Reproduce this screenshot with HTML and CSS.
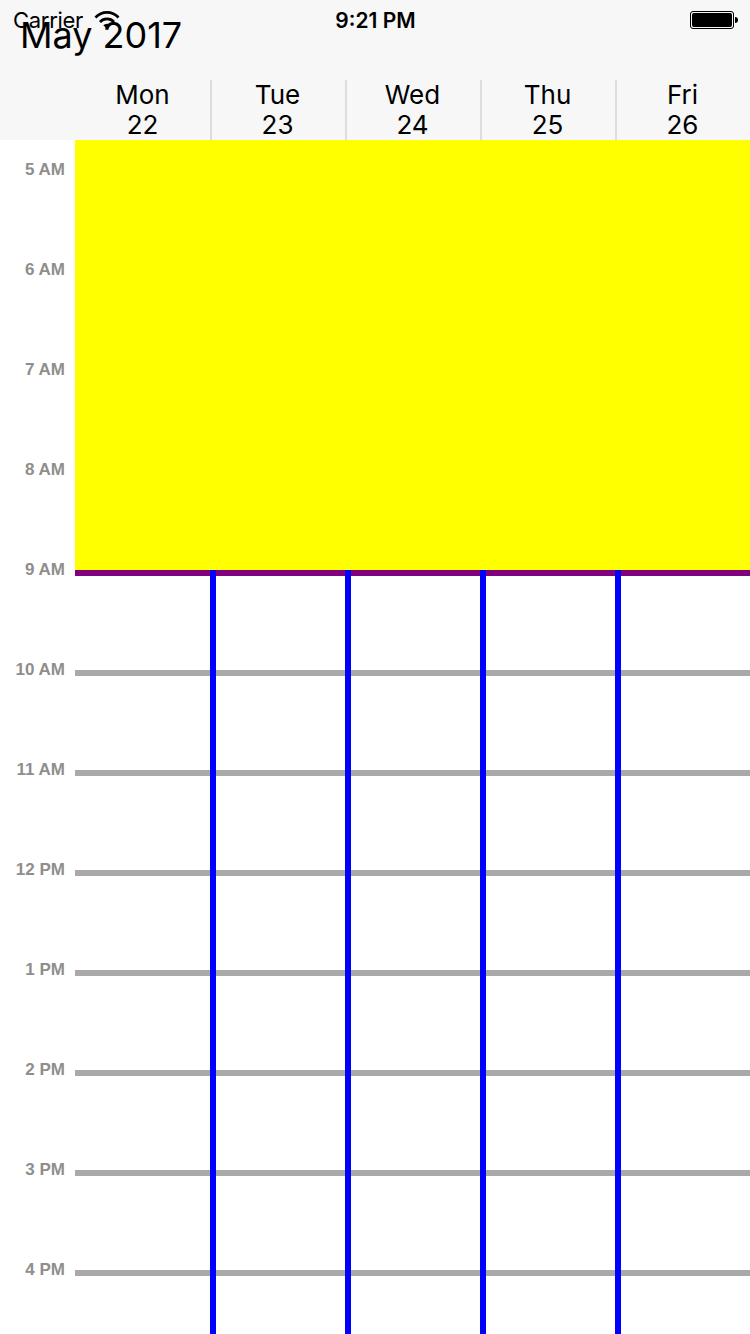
FILE: index.html
```html
<!DOCTYPE html>
<html lang="en">
  <head>
    <meta charset="UTF-8" />
    <meta name="viewport" content="width=device-width, initial-scale=1.0" />
    <title>Week view</title>
    <link rel="stylesheet" href="styles.css">
  </head>
  <body>
    <div class="status-bar">
      <div class="status-left">
        <span class="carrier">Carrier</span>
        <svg class="wifi" width="28" height="20" viewBox="0 0 28 20">
          <path d="M1.5 7.5 A17 17 0 0 1 26.5 7.5 L24.6 9.4 A14.4 14.4 0 0 0 3.4 9.4 Z" fill="#000" />
          <path d="M6 12 A11 11 0 0 1 22 12 L20.1 13.9 A8.4 8.4 0 0 0 7.9 13.9 Z" fill="#000" />
          <path d="M10.3 16.2 A5.2 5.2 0 0 1 17.7 16.2 L14 20 Z" fill="#000" />
        </svg>
      </div>
      <span class="clock">9:21 PM</span>
      <div class="battery">
        <div class="battery-body"><div class="battery-level"></div></div>
        <div class="battery-tip"></div>
      </div>
    </div>

    <header class="top">
      <h1 class="month">May 2017</h1>
      <div class="days">
        <div class="day">Mon<br>22</div>
        <div class="day">Tue<br>23</div>
        <div class="day">Wed<br>24</div>
        <div class="day">Thu<br>25</div>
        <div class="day">Fri<br>26</div>
      </div>
    </header>

    <main class="calendar">
      <div class="hour"><span class="hour-label">5 AM</span><div class="hour-line"></div></div>
      <div class="hour"><span class="hour-label">6 AM</span><div class="hour-line"></div></div>
      <div class="hour"><span class="hour-label">7 AM</span><div class="hour-line"></div></div>
      <div class="hour"><span class="hour-label">8 AM</span><div class="hour-line"></div></div>
      <div class="hour"><span class="hour-label">9 AM</span><div class="hour-line"></div></div>
      <div class="hour"><span class="hour-label">10 AM</span><div class="hour-line"></div></div>
      <div class="hour"><span class="hour-label">11 AM</span><div class="hour-line"></div></div>
      <div class="hour"><span class="hour-label">12 PM</span><div class="hour-line"></div></div>
      <div class="hour"><span class="hour-label">1 PM</span><div class="hour-line"></div></div>
      <div class="hour"><span class="hour-label">2 PM</span><div class="hour-line"></div></div>
      <div class="hour"><span class="hour-label">3 PM</span><div class="hour-line"></div></div>
      <div class="hour"><span class="hour-label">4 PM</span><div class="hour-line"></div></div>

      <div class="event"></div>
      <div class="columns">
        <div class="column"></div>
        <div class="column"></div>
        <div class="column"></div>
        <div class="column"></div>
      </div>
    </main>
  </body>
</html>
```

FILE: styles.css
```css
html,
body {
  margin: 0;
  padding: 0;
  height: 1334px;
  overflow: hidden;
}

body {
  position: relative;
  background-color: white;
  font-family: Inter, "Liberation Sans", sans-serif;
  color: black;
}

/* status bar sits on top of the header */
.status-bar {
  position: absolute;
  top: 0;
  left: 0;
  right: 0;
  height: 40px;
  display: flex;
  align-items: center;
  justify-content: space-between;
  padding: 0 12px 0 13px;
  z-index: 5;
}

.status-left {
  display: flex;
  align-items: center;
  gap: 10px;
  width: 200px;
}

.carrier {
  font-size: 22px;
  font-family: Inter, sans-serif;
  letter-spacing: -0.3px;
}

.clock {
  font-size: 21px;
  font-weight: 600;
}

.wifi {
  margin-top: -2px;
}

.battery {
  width: 200px;
  display: flex;
  justify-content: flex-end;
  align-items: center;
}

.battery-body {
  width: 44px;
  height: 18px;
  box-sizing: border-box;
  border: 1px solid black;
  border-radius: 3px;
  padding: 1px;
}

.battery-level {
  height: 100%;
  background-color: black;
  border-radius: 2px;
}

.battery-tip {
  width: 3px;
  height: 6px;
  background-color: black;
  border-radius: 0 3px 3px 0;
  margin-left: 1px;
}

.top {
  height: 140px;
  background-color: #f7f7f7;
}

.month {
  margin: 0;
  height: 80px;
  padding: 15px 0 0 20px;
  box-sizing: border-box;
  font-size: 36px;
  line-height: 40px;
  font-weight: 400;
}

.days {
  display: flex;
  padding-left: 75px;
}

.day {
  width: 135px;
  height: 60px;
  font-size: 26px;
  line-height: 30px;
  text-align: center;
  box-shadow: 2px 0 0 #ddd;
}

.calendar {
  position: relative;
  padding-top: 20px;
}

.hour {
  display: flex;
  height: 100px;
}

.hour-label {
  width: 65px;
  margin-right: 10px;
  height: 20px;
  line-height: 20px;
  text-align: right;
  font-family: "Liberation Sans", Arial, sans-serif;
  font-size: 17px;
  font-weight: bold;
  color: #8e8e8e;
}

.hour-line {
  flex: 1;
  height: 6px;
  margin-top: 10px;
  background-color: #a9a9a9;
}

.event {
  position: absolute;
  top: 0;
  left: 75px;
  right: 0;
  height: 430px;
  background-color: yellow;
  border-bottom: 6px solid purple;
}

.columns {
  position: absolute;
  top: 430px;
  left: 75px;
  right: 0;
  bottom: 0;
  height: 764px;
  display: flex;
}

.column {
  width: 135px;
  height: 100%;
  box-shadow: 6px 0 0 blue;
}
```
